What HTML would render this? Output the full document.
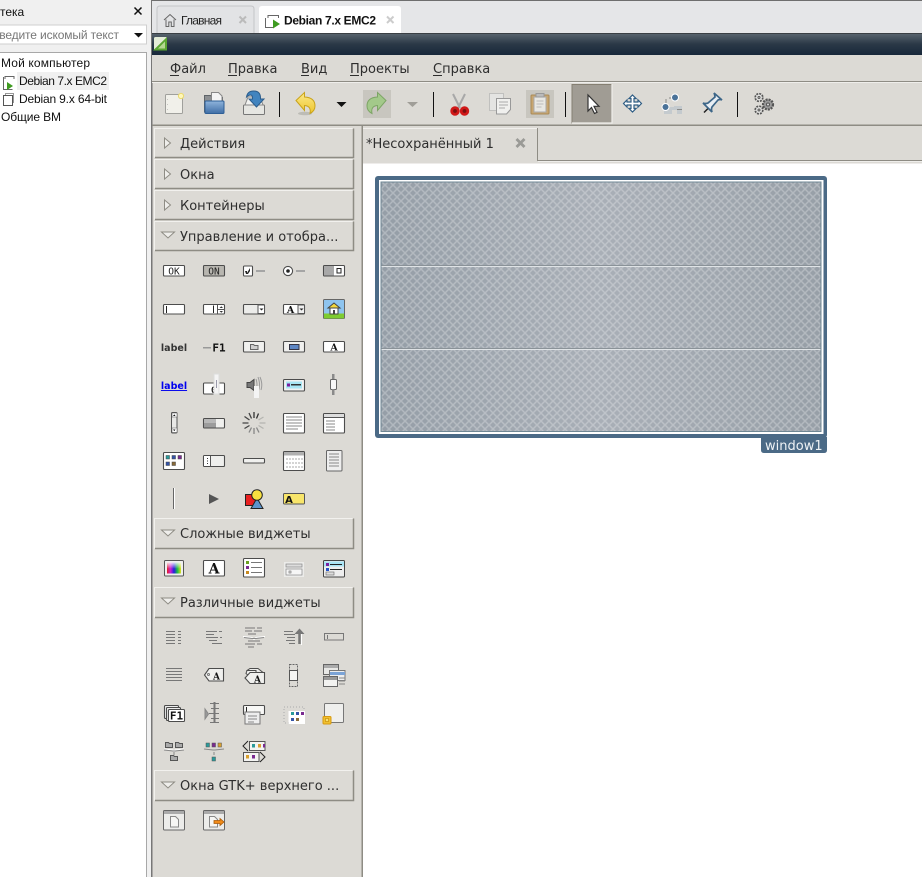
<!DOCTYPE html>
<html><head><meta charset="utf-8">
<style>
html,body{margin:0;padding:0;width:922px;height:877px;overflow:hidden;background:#dcdad5}
svg{display:block;position:absolute;left:0;top:0}
.l{font-family:"Liberation Sans",sans-serif;font-size:12px;fill:#111}
.d{font-family:"DejaVu Sans",sans-serif;font-size:13px;fill:#2e2e2e}
.i{fill:#fff;stroke:#4c4c4c;stroke-width:1.100}
.n{fill:none;stroke:#777;stroke-width:1}
.a{font-family:"DejaVu Serif","Liberation Serif",serif;font-weight:bold;font-size:10px;fill:#111;text-anchor:middle}
</style></head>
<body>
<svg width="922" height="877" viewBox="0 0 922 877" xmlns="http://www.w3.org/2000/svg">
<defs>
<linearGradient id="bar" x1="0" y1="0" x2="0" y2="1"><stop offset="0" stop-color="#5b6670"/><stop offset=".5" stop-color="#2b3947"/><stop offset="1" stop-color="#17273a"/></linearGradient>
<linearGradient id="win" x1="0" y1="0" x2="1" y2="0"><stop offset="0" stop-color="#959ea7"/><stop offset=".5" stop-color="#a9afb7"/><stop offset="1" stop-color="#979fa7"/></linearGradient>
<linearGradient id="rb" x1="0" y1="0" x2="1" y2="0"><stop offset="0" stop-color="#e02020"/><stop offset=".25" stop-color="#d020d0"/><stop offset=".5" stop-color="#2020e0"/><stop offset=".75" stop-color="#20c040"/><stop offset="1" stop-color="#e0e020"/></linearGradient>
<linearGradient id="wt" x1="0" y1="0" x2="0" y2="1"><stop offset="0" stop-color="#fff" stop-opacity=".85"/><stop offset="1" stop-color="#fff" stop-opacity=".05"/></linearGradient>
<linearGradient id="fold" x1="0" y1="0" x2="0" y2="1"><stop offset="0" stop-color="#8fb4dc"/><stop offset="1" stop-color="#3f6ea6"/></linearGradient>
<linearGradient id="yel" x1="0" y1="0" x2="0" y2="1"><stop offset="0" stop-color="#fbe98a"/><stop offset="1" stop-color="#eec52c"/></linearGradient>
<pattern id="dia" width="8" height="8" patternUnits="userSpaceOnUse" patternTransform="translate(1 1)">
<path d="M0 0L8 8M8 0L0 8" stroke="#fff" stroke-opacity=".26" stroke-width="1.500" fill="none"/>
</pattern>
</defs>

<!-- left panel -->
<rect x="0" y="0" width="151" height="877" fill="#f0f0f0"/>
<text class="l" x="0" y="16">тека</text>
<path d="M134.500 7.500l7 7m0-7l-7 7" stroke="#111" stroke-width="1.500"/>
<rect x="-2" y="25" width="148.500" height="19" fill="#fff" stroke="#cfcfcf"/>
<text class="l" x="-7" y="39" textLength="126" style="fill:#777">введите искомый текст</text>
<path d="M134 33h9l-4.500 4.500z" fill="#111"/>
<rect x="-2" y="52.500" width="148.500" height="830" fill="#fff" stroke="#a8a8a8"/>
<text class="l" x="1" y="67" textLength="89">Мой компьютер</text>
<rect x="17" y="72" width="92" height="18" fill="#f0f0f0"/>
<text class="l" x="19" y="85" textLength="88">Debian 7.x EMC2</text>
<path d="M5 79v-2.500h9v2.500M3.500 77v12.500h9" fill="none" stroke="#666"/><path d="M7 82v8l6-4z" fill="#3e9b20"/>
<text class="l" x="19" y="103" textLength="88">Debian 9.x 64-bit</text>
<rect x="5.500" y="93.500" width="8" height="9" fill="none" stroke="#999"/><rect x="3.500" y="95.500" width="9" height="10" fill="#fff" stroke="#555"/>
<text class="l" x="1" y="121" textLength="60">Общие ВМ</text>
<rect x="151" y="0" width="1.500" height="877" fill="#777"/>
<rect x="147" y="0" width="4" height="877" fill="#f0f0f0"/>

<!-- top tabs -->
<rect x="152" y="0" width="770" height="33" fill="#e5e6e8"/>
<rect x="152" y="0" width="770" height="1" fill="#6e6e6e"/>
<path d="M157 33V9q0-3 3-3h91q3 0 3 3v24" fill="#e2e3e5" stroke="#c4c5c8"/>
<path d="M164 20l6-5.500 6 5.500M166 19.500v7h2.800v-4.500h2.500v4.500h2.700v-7" fill="none" stroke="#666"/>
<text class="l" x="181" y="24.500" textLength="41" style="fill:#222">Главная</text>
<path d="M239.500 16.500l6.500 6.500m0-6.500l-6.500 6.500" stroke="#bbb" stroke-width="2"/>
<path d="M259 33V9q0-3 3-3h136q3 0 3 3v24z" fill="#fff"/>
<path d="M268 18v-2.500h10.500v2.500M265.500 18v9.500h8" fill="none" stroke="#666"/><path d="M273 19.500v9l7-4.500z" fill="#3e9b20"/>
<text x="284" y="24.500" textLength="92" style="font-family:'Liberation Sans',sans-serif;font-size:12px;font-weight:bold;fill:#111">Debian 7.x EMC2</text>
<path d="M387 16.500l6.500 6.500m0-6.500l-6.500 6.500" stroke="#ccc" stroke-width="2"/>

<!-- title bar -->
<rect x="152" y="33" width="770" height="22" fill="url(#bar)"/>
<rect x="152" y="33" width="770" height="1" fill="#3a3f44"/>
<rect x="154" y="37" width="13" height="13" rx="1.500" fill="#e4edd8"/>
<path d="M153 50.500L167 37v13.500z" fill="#5aa632"/><path d="M158 48.500l7-7v7z" fill="#b5d892"/>

<!-- menu -->
<rect x="152" y="55" width="770" height="26" fill="#dcdad5"/>
<rect x="152" y="81" width="770" height="1" fill="#8e8c84"/>
<rect x="152" y="82" width="770" height="1" fill="#efeeeb"/>
<text class="d" x="170" y="73">Файл</text><rect x="170" y="75" width="9" height="1" fill="#2e2e2e"/>
<text class="d" x="228" y="73">Правка</text><rect x="228" y="75" width="9" height="1" fill="#2e2e2e"/>
<text class="d" x="301" y="73">Вид</text><rect x="301" y="75" width="8" height="1" fill="#2e2e2e"/>
<text class="d" x="350" y="73">Проекты</text><rect x="350" y="75" width="9" height="1" fill="#2e2e2e"/>
<text class="d" x="433" y="73">Справка</text><rect x="433" y="75" width="9" height="1" fill="#2e2e2e"/>

<!-- toolbar -->
<rect x="152" y="124.500" width="770" height="1.500" fill="#8e8c84"/>
<rect x="165.500" y="94.500" width="17" height="19" rx="1" fill="#f1f0ea" stroke="#a0a09c"/>
<circle cx="181" cy="96" r="2.600" fill="#fff7b8" stroke="#ead96e"/>
<path d="M167.500 99v.5M167.500 104v.5M167.500 109v.5" stroke="#999"/>
<path d="M204.500 112V95.500h6l2 2h10v14.500z" fill="#8c8f92" stroke="#5f6468"/>
<path d="M211.500 92.500h7l3.500 3.500v6h-10.500z" fill="#f4f4f4" stroke="#888"/>
<rect x="205" y="101" width="19" height="12.500" rx="1" fill="url(#fold)" stroke="#2f5f96"/>
<rect x="243.500" y="105" width="21" height="9.500" rx="1" fill="#e6e6e2" stroke="#777"/>
<path d="M245 105l3-8h12l3 8z" fill="#f2f2f0" stroke="#888"/>
<path d="M246.500 97q1-6 7-6 7 0 7 7v1h3.500l-7.500 8-7.500-8h3.500v-1q0-3-2-3-2 0-4 2z" fill="#4184bf" stroke="#2c5d8c"/>
<rect x="279" y="92" width="1" height="25" fill="#111"/>
<ellipse cx="305" cy="113.500" rx="7" ry="1.800" fill="#bdbcb6"/>
<path d="M296 100.500L304.500 92.500v4.500q10.500 .5 10.500 9 0 5-5 7.500 1.500-7.500-5.500-8v5z" fill="url(#yel)" stroke="#c9a31c"/>
<path d="M336.500 102h10l-5 5z" fill="#111"/>
<rect x="363" y="90" width="28" height="28" fill="#c8c6bf"/>
<path d="M386 100.500L377.500 92.500v4.500q-10.500 .5-10.500 9 0 5 5 7.500-1.500-7.500 5.500-8v5z" fill="#a3c98a" stroke="#7da565"/>
<path d="M407 102h11l-5.500 5z" fill="#a09e98"/>
<rect x="433" y="92" width="1" height="25" fill="#111"/>
<path d="M453 94l7 14m5-14l-7 14" stroke="#a8a8a8" stroke-width="2"/>
<circle cx="455" cy="111" r="3.300" fill="#7a1010" stroke="#d01818" stroke-width="2.800"/>
<circle cx="464.500" cy="111" r="3.300" fill="#7a1010" stroke="#d01818" stroke-width="2.800"/>
<rect x="489.500" y="93.500" width="14" height="17" fill="#e4e4e2" stroke="#c0c0be"/>
<path d="M496.500 98.500h14v11l-4 4.500h-10z" fill="#f0f0ee" stroke="#999"/>
<path d="M499 102h9M499 105h9M499 108h6" stroke="#aaa"/>
<rect x="526" y="90" width="28" height="28" fill="#c8c6bf"/>
<rect x="531" y="95" width="18" height="19" rx="1" fill="#c8a670" stroke="#a88a58"/>
<rect x="534" y="97" width="12" height="15" fill="#e8e7e2" stroke="#aaa"/>
<rect x="536" y="93.500" width="8" height="3.500" fill="#bbb" stroke="#999"/>
<path d="M536.500 101h7M536.500 104h7M536.500 107h5" stroke="#bbb"/>
<rect x="565" y="92" width="1" height="25" fill="#111"/>
<rect x="572" y="84" width="40" height="39" fill="#a09c94"/>
<path d="M572 123.500V84.500h39.500" fill="none" stroke="#857f72"/><path d="M572 123h40V84" fill="none" stroke="#efeeeb" stroke-width="1.200"/>
<path d="M588 95v16l3.500-3.500 3 6 2.500-1.200-3-6h5z" fill="#fff" stroke="#333" stroke-width="1.200"/>
<path d="M632.500 95l3.500 3.500h-2v3.500h4v-2l3.500 3.500-3.500 3.500v-2h-4v3.500h2l-3.500 3.500-3.500-3.500h2v-3.500h-4v2l-3.500-3.500 3.500-3.500v2h4v-3.500h-2z" fill="#fff" stroke="#2f5d84" stroke-width="1.200"/>
<path d="M666 99v8M669 98h6" stroke="#8a8a88"/><rect x="664" y="107" width="18" height="7" fill="#c4cace"/><rect x="674" y="106" width="8" height="2" fill="#c4cace"/>
<path d="M677 109.500h5" stroke="#8a8a88"/><rect x="672" y="110" width="5" height="4" fill="#dcdad5"/>
<circle cx="675" cy="97.500" r="3.500" fill="#4a7298" stroke="#fff"/>
<circle cx="665.500" cy="107" r="3.500" fill="#4a7298" stroke="#fff"/>
<path d="M704 112.500l5-5" stroke="#222" stroke-width="1.500"/>
<path d="M703 103q3 1 5 0l7-6q0-2-1-4l8 7q-2-1-4 0l-6 7q-1 2 0 5z" fill="#e8eef4" stroke="#3d6688" stroke-width="1.700"/>
<rect x="737" y="92" width="1" height="25" fill="#111"/>
<g fill="#e2e2e0" stroke="#555">
<circle cx="759" cy="97.500" r="3.800" stroke-dasharray="2 1" stroke-width="1.700"/><circle cx="759" cy="97.500" r="1"/>
<circle cx="759" cy="110" r="3.800" stroke-dasharray="2 1" stroke-width="1.700"/><circle cx="759" cy="110" r="1"/>
<circle cx="768" cy="104.500" r="5" fill="#999" stroke-dasharray="2 1" stroke-width="2.200"/><circle cx="768" cy="104.500" r="1.500" fill="#ddd"/>
</g>

<!-- left palette -->
<rect x="152.500" y="126" width="209" height="751" fill="#dcdad5"/>
<rect x="361.500" y="126" width="1.500" height="751" fill="#8e8c84"/>

<!-- section headers -->
<path d="M154.500 157.500V128.500H353" fill="#dcdad5" stroke="#f2f1ee"/><path d="M155 157.500h198.500V128.500" fill="none" stroke="#8e8c84" stroke-width="1.500"/>
<path d="M154.500 188.500V159.500H353" fill="#dcdad5" stroke="#f2f1ee"/><path d="M155 188.500h198.500V159.500" fill="none" stroke="#8e8c84" stroke-width="1.500"/>
<path d="M154.500 219.500V190.500H353" fill="#dcdad5" stroke="#f2f1ee"/><path d="M155 219.500h198.500V190.500" fill="none" stroke="#8e8c84" stroke-width="1.500"/>
<path d="M154.500 250.500V221.500H353" fill="#dcdad5" stroke="#f2f1ee"/><path d="M155 250.500h198.500V221.500" fill="none" stroke="#8e8c84" stroke-width="1.500"/>
<path d="M154.500 548.500V518.500H353" fill="#dcdad5" stroke="#f2f1ee"/><path d="M155 548.500h198.500V518.500" fill="none" stroke="#8e8c84" stroke-width="1.500"/>
<path d="M154.500 617.500V587.500H353" fill="#dcdad5" stroke="#f2f1ee"/><path d="M155 617.500h198.500V587.500" fill="none" stroke="#8e8c84" stroke-width="1.500"/>
<path d="M154.500 800.500V770.500H353" fill="#dcdad5" stroke="#f2f1ee"/><path d="M155 800.500h198.500V770.500" fill="none" stroke="#8e8c84" stroke-width="1.500"/>
<g fill="#efeeeb" stroke="#8e8c84">
<path d="M164.500 138l6 5-6 5z"/><path d="M164.500 169l6 5-6 5z"/><path d="M164.500 200l6 5-6 5z"/>
<path d="M161.500 232h13l-6.500 6z"/><path d="M161.500 530h13l-6.500 6z"/><path d="M161.500 598h13l-6.500 6z"/><path d="M161.500 782h13l-6.500 6z"/>
</g>
<text class="d" x="180" y="148">Действия</text>
<text class="d" x="180" y="179">Окна</text>
<text class="d" x="180" y="210">Контейнеры</text>
<text class="d" x="180" y="241">Управление и отобра...</text>
<text class="d" x="180" y="538">Сложные виджеты</text>
<text class="d" x="180" y="607">Различные виджеты</text>
<text class="d" x="180" y="790">Окна GTK+ верхнего ...</text>

<!-- row 1 -->
<rect class="i" x="163.500" y="265.500" width="21" height="10.500" rx="1"/>
<text x="174" y="274.500" text-anchor="middle" style="font-family:'DejaVu Sans Mono',monospace;font-size:9.500px;fill:#222">OK</text>
<rect x="203.500" y="265.500" width="21" height="10.500" rx="1" fill="#b8b6b0" stroke="#4c4c4c" stroke-width="1.100"/>
<text x="214" y="274.500" text-anchor="middle" style="font-family:'DejaVu Sans Mono',monospace;font-size:9.500px;fill:#222">ON</text>
<rect class="i" x="243.500" y="266" width="9" height="10" rx="1"/><path d="M245 271h2v2l3-5v3l-2 3h-2z" fill="#222"/><rect x="256" y="270" width="9" height="2" fill="#a5a5a5"/>
<circle class="i" cx="288" cy="271" r="4.600"/><circle cx="288" cy="271" r="1.800" fill="#222"/><rect x="296" y="270" width="9" height="2" fill="#a5a5a5"/>
<rect class="i" x="323.500" y="265.500" width="21" height="10.500" rx="1"/><rect x="324" y="266" width="10" height="9.500" fill="#a8a8a8"/><rect x="337" y="268.500" width="4" height="4.500" fill="none" stroke="#222"/>
<!-- row 2 -->
<rect class="i" x="163.500" y="304.500" width="21" height="9.500" rx="1"/><rect x="166" y="306" width="1" height="7" fill="#222"/>
<rect class="i" x="203.500" y="304.500" width="21" height="9.500" rx="1"/><rect x="213" y="305.500" width="1" height="7.500" fill="#222"/><path d="M217.500 305v9M218 309.500h7" stroke="#555"/><path d="M219.500 308h3.500l-1.700-1.800zM219.500 311h3.500l-1.700 1.800z" fill="#333"/>
<rect x="243.500" y="304.500" width="21" height="9.500" rx="1" fill="#ececea" stroke="#4c4c4c" stroke-width="1.100"/><rect x="258" y="305" width="6.500" height="8.500" fill="#fff" stroke="#555"/><path d="M259.500 308.500h4l-2 2z" fill="#222"/>
<rect class="i" x="283.500" y="304.500" width="21" height="9.500" rx="1"/><text class="a" x="290.500" y="313" style="font-size:9.500px">A</text><rect x="298" y="305" width="6.500" height="8.500" fill="#eee" stroke="#555"/><path d="M299.500 308.500h4l-2 2z" fill="#222"/>
<rect x="323.500" y="299.500" width="21" height="19" rx="1" fill="#8ec4ef" stroke="#666"/><rect x="324" y="313.500" width="20" height="5" fill="#7ecc30"/><path d="M328 308l6-5 6 5z" fill="#f5d83c" stroke="#444"/><rect x="330" y="308" width="8" height="6" fill="#fff" stroke="#444"/><rect x="333" y="310" width="2" height="4" fill="#444"/>
<!-- row 3 -->
<text x="174" y="351" text-anchor="middle" style="font-family:'DejaVu Sans',sans-serif;font-size:9.500px;font-weight:bold;fill:#333">label</text>
<rect x="203" y="347" width="8" height="1.500" fill="#999"/><text x="219" y="351.500" text-anchor="middle" style="font-family:'DejaVu Sans Mono',monospace;font-size:11px;font-weight:bold;fill:#111">F1</text>
<rect x="243.500" y="341.500" width="21" height="10.500" rx="1" fill="#f0f0ee" stroke="#4c4c4c" stroke-width="1.100"/><path d="M250.500 344.500h3l1 1h3.500v4h-7.500z" fill="#cfcfcf" stroke="#666"/>
<rect x="283.500" y="341.500" width="21" height="10.500" rx="1" fill="#f0f0ee" stroke="#4c4c4c" stroke-width="1.100"/><rect x="289.500" y="344.500" width="9.500" height="5" fill="#5d86c4" stroke="#334"/>
<rect class="i" x="323.500" y="341.500" width="21" height="10.500" rx="1"/><text class="a" x="334" y="350.500" style="font-size:9.500px">A</text>
<!-- row 4 -->
<text x="174" y="389" text-anchor="middle" style="font-family:'DejaVu Sans',sans-serif;font-size:9.500px;font-weight:bold;fill:#0000ee;text-decoration:underline">label</text>
<rect class="i" x="203.500" y="383" width="21" height="11" rx="1"/><text x="211" y="393" style="font-family:'DejaVu Sans Mono',monospace;font-size:9px;font-weight:bold;fill:#222">0</text>
<rect x="214" y="374" width="5" height="20" fill="#f4f4f4" stroke="#ddd"/><rect x="216" y="380" width="1" height="8" fill="#99a"/>
<path d="M247 382.500h3l4-3v11l-4-3h-3z" fill="#777" stroke="#444"/><path d="M256 379q2 6 0 11M258 377q3 8 0 15M260 377q3 7 1 13" fill="none" stroke="#9a9a9a"/>
<rect x="254" y="386" width="5" height="12" fill="#f4f4f4"/>
<rect x="283.500" y="379.500" width="21" height="11.500" rx="1" fill="#f2f2f2" stroke="#4c4c4c" stroke-width="1.100"/><rect x="286" y="381.500" width="16" height="7" fill="#a8e6f4"/><rect x="287" y="383.500" width="3" height="3" fill="#7a1fa0"/><rect x="291" y="384" width="10" height="1.500" fill="#333"/>
<rect x="332" y="374" width="2.500" height="6" fill="#8a8a8a"/><rect x="330.500" y="379.500" width="6" height="10" rx="1" fill="#f8f8f8" stroke="#666"/><rect x="332" y="389" width="2.500" height="6" fill="#8a8a8a"/>
<!-- row 5 -->
<rect x="171.500" y="412.500" width="5.500" height="20.500" rx="1" fill="#e8e8e6" stroke="#555"/><rect x="172" y="413" width="5" height="4" fill="#fff" stroke="#555" stroke-width=".5"/><rect x="172" y="428" width="5" height="4.500" fill="#fff" stroke="#555" stroke-width=".5"/>
<path d="M173 416h2.500l-1.200-1.600zM173 429.500h2.500l-1.200 1.600z" fill="#111"/>
<rect x="203.500" y="418.500" width="21" height="9.500" rx="1" fill="#f0f0ee" stroke="#4c4c4c" stroke-width="1.100"/><rect x="204" y="419" width="12" height="8.500" fill="#9c9c9c"/><rect x="204" y="419" width="12" height="4" fill="#b8b8b8"/>
<g stroke-width="1.300">
<path d="M254 418V412M256.500 418.500l2-5" stroke="#333"/><path d="M251.500 418.500l-2.500-5.500M249.500 420l-5-3.500M248.500 423h-6M249.500 425.500l-5 3" stroke="#444"/>
<path d="M251.500 427.500l-2.500 5M254 428v6M256.500 427.500l2.500 5" stroke="#888"/><path d="M258.500 425.500l5 3M259.500 423h6M258.500 420l5-3" stroke="#b4b4b0"/>
</g>
<rect class="i" x="283.500" y="413.500" width="21" height="19.500" rx="1"/><path d="M286 417h16M286 420h16M286 423h16M286 426h16M286 429h12" stroke="#888"/>
<rect class="i" x="323.500" y="413.500" width="21" height="19.500" rx="1"/><rect x="324" y="414" width="20" height="3.500" fill="#ddd"/><path d="M324 417.500h20" stroke="#555"/><path d="M326 421h9M326 424h9M326 427h9M326 430h9" stroke="#888"/>
<!-- row 6 -->
<rect class="i" x="163.500" y="452.500" width="21" height="17" rx="1"/>
<rect x="166" y="455.500" width="3.500" height="3.500" fill="#2a9a9a" stroke="#444" stroke-width=".5"/><rect x="172" y="455.500" width="3.500" height="3.500" fill="#3454a8" stroke="#444" stroke-width=".5"/><rect x="178" y="455.500" width="3.500" height="3.500" fill="#7a2a90" stroke="#444" stroke-width=".5"/>
<rect x="166" y="462" width="3.500" height="3.500" fill="#3454a8" stroke="#444" stroke-width=".5"/><rect x="172" y="462" width="3.500" height="3.500" fill="#886a38" stroke="#444" stroke-width=".5"/>
<rect x="203.500" y="455.500" width="21" height="11" rx="1" fill="#efefed" stroke="#4c4c4c" stroke-width="1.100"/><rect x="204" y="456" width="6.500" height="10" fill="#fff"/><path d="M210.500 456v10" stroke="#555"/><path d="M207.500 458v1M207.500 460.500v1M207.500 463v1" stroke="#333"/>
<rect x="243.500" y="458.500" width="21" height="4.500" rx="1" fill="#f0f0ee" stroke="#4c4c4c" stroke-width="1.100"/>
<rect class="i" x="283.500" y="451.500" width="21" height="19" rx="1"/><rect x="284" y="452" width="20" height="3.500" fill="#b0b0b0"/><path d="M286.500 459h16M286.500 463h16M286.500 467h16" stroke="#555" stroke-dasharray="1 2"/>
<rect x="326.500" y="450.500" width="15.500" height="20.500" rx="1" fill="#eee" stroke="#666"/><path d="M329 454h10M329 457h10M329 460h10M329 463h10M329 466h10" stroke="#888"/>
<!-- row 7 -->
<rect x="173" y="488" width="1" height="21" fill="#666"/><rect x="174" y="488" width="1" height="21" fill="#fff"/>
<path d="M209 494l10 5-10 5z" fill="#555"/>
<rect x="245.500" y="494.500" width="10" height="11" fill="#e82020" stroke="#222"/><path d="M257 498l6 10.500h-12z" fill="#5c94cc" stroke="#222"/><circle cx="257" cy="495" r="5.300" fill="#f8e040" stroke="#222"/>
<rect x="283.500" y="493.500" width="21" height="10.500" rx="1" fill="#f8e56a" stroke="#555"/><text x="289" y="503" text-anchor="middle" style="font-family:'DejaVu Sans',sans-serif;font-size:10px;font-weight:bold;fill:#111">A</text>

<!-- complex -->
<rect x="164.500" y="560.500" width="19" height="15.500" rx="1" fill="#f0f0f0" stroke="#555"/><rect x="167" y="562.500" width="14" height="11" fill="url(#rb)"/><rect x="167" y="562.500" width="14" height="6" fill="url(#wt)"/>
<rect class="i" x="203.500" y="560.500" width="21" height="15.500" rx="1"/><text class="a" x="214" y="573.500" style="font-size:14px">A</text>
<rect class="i" x="243.500" y="558.500" width="21" height="18.500" rx="1"/><rect x="246" y="561" width="3" height="3" fill="#6aa020"/><rect x="246" y="566" width="3" height="3" fill="#7a2a90"/><rect x="246" y="571" width="3" height="3" fill="#c88a20"/><path d="M251 562.500h11M251 567.500h11M251 572.500h11" stroke="#777"/>
<rect x="284" y="562" width="20" height="15" fill="#ececea"/><rect x="286" y="564" width="16" height="3" fill="#ddd" stroke="#888" stroke-width=".7"/><rect x="286" y="569" width="16" height="6" fill="#f6f6f6" stroke="#888" stroke-width=".7"/><rect x="289" y="571" width="2" height="2" fill="none" stroke="#666" stroke-width=".6"/>
<rect x="323.500" y="560.500" width="21" height="16.500" rx="1" fill="#eee" stroke="#444"/><rect x="324" y="561.500" width="20" height="5" fill="#a8e4f4"/><rect x="326" y="563" width="3" height="3" fill="#7a1fa0"/><rect x="330" y="564" width="12" height="1" fill="#222"/><rect x="326" y="568" width="3" height="3" fill="#2454c8"/><rect x="330" y="569" width="12" height="1" fill="#222"/><rect x="326" y="572" width="8" height="3" fill="#ddd" stroke="#666" stroke-width=".6"/>

<!-- misc row 1 -->
<g stroke="#777" fill="none">
<path d="M166 631.500h9M166 634.500h9M166 637.500h9M166 640.500h9M166 643.500h9M178 631.500h3M178 634.500h3M178 637.500h3M178 640.500h3M178 643.500h3"/>
<path d="M206 631.500h11M219 631.500h3M206 634.500h8M206 637.500h12M220 637.500h2M209 640.500h8M212 643.500h10"/>
<path d="M245 628h10M257 628h5M245 631h7M254 631h8M248 634h8M248 641h12M245 644h10M257 644h5M248 647h6"/>
<path d="M284 631.500h9M284 634.500h11M287 637.500h8M286 640.500h9M289 643.500h6"/>
<rect x="324.500" y="633.500" width="19" height="6.500"/>
<path d="M327.500 635v4"/>
<path d="M166 668.500h16M166 671.500h16M166 674.500h16M166 677.500h16M166 680.500h16"/>
</g>
<path d="M243 636.500l9 1 2 2 2-2 9-1" fill="none" stroke="#fff"/><path d="M244 637.500l8 1h4l8-1" fill="none" stroke="#888"/>
<path d="M299.500 631v13" stroke="#777" stroke-width="2.500"/><path d="M294.500 634l5-5.500 5 5.500z" fill="#777"/><path d="M301.500 634v11" stroke="#fff"/>

<!-- misc row 2 -->
<path d="M209 668.500h14.500v12.500H209l-4.500-6z" fill="#f0f0ee" stroke="#4c4c4c" stroke-width="1.100"/><circle cx="208.500" cy="674.500" r="1" fill="none" stroke="#777"/><text class="a" x="216.500" y="679.500" style="font-size:9px">A</text>
<path d="M250 668.500h8l5 4h-13l-3-2z" fill="#ececea" stroke="#4c4c4c"/><path d="M247 670.500h9v8h-4l-6-5z" fill="#f0f0ee" stroke="#4c4c4c"/>
<path d="M250 672.500h14.500v11H250l-5-5.500z" fill="#f0f0ee" stroke="#4c4c4c" stroke-width="1.100"/><text class="a" x="257.500" y="682.500" style="font-size:9px">A</text>
<g fill="none" stroke="#666" stroke-dasharray="2 1"><rect x="289.500" y="664.500" width="8" height="6"/><rect x="289.500" y="680.500" width="8" height="6"/></g><rect x="289.500" y="670.500" width="8" height="10" fill="#f6f6f4" stroke="#555"/>
<rect x="323.500" y="664.500" width="15" height="10" fill="#e8e8e6" stroke="#666"/><rect x="324" y="665" width="14" height="3" fill="#aaa"/>
<rect x="329.500" y="670.500" width="15.500" height="10" fill="#eee" stroke="#777"/><rect x="330" y="672" width="15" height="3" fill="#7ba3d6"/>
<rect x="323.500" y="676.500" width="14" height="10" fill="#f2f2f0" stroke="#666"/><rect x="324" y="677" width="13" height="3" fill="#999"/>
<path d="M339 678h6M339 681h6M339 684h6" stroke="#888"/>

<!-- misc row 3 -->
<rect class="i" x="164.500" y="705.500" width="14" height="13" rx="1" style="fill:#eee"/><rect class="i" x="166.500" y="707.500" width="14" height="13" rx="1" style="fill:#eee"/>
<rect class="i" x="168.500" y="709.500" width="16" height="12" rx="1"/><text x="176.500" y="719.500" text-anchor="middle" style="font-family:'DejaVu Sans Mono',monospace;font-size:11px;font-weight:bold;fill:#111">F1</text>
<path d="M205 709v10l3.500-5z" fill="#999" stroke="#888"/>
<path d="M214.500 702v20" stroke="#777" stroke-width="2"/><path d="M210 703.500h9M211 708.500h8M209 713.500h10M211 718.500h8M210 722.500h9" stroke="#777"/>
<rect class="i" x="243.500" y="705.500" width="21" height="9" rx="1" style="fill:#f8f8f6"/><rect x="246" y="707" width="1" height="7" fill="#222"/>
<rect x="245" y="712" width="15" height="12" fill="#eee" stroke="#777"/><path d="M248 716h9M248 719h9M248 722h6" stroke="#888"/>
<rect x="284" y="707" width="20" height="16" fill="none" stroke="#aaa" stroke-dasharray="1 2"/>
<rect x="288.500" y="711" width="16.500" height="13" fill="#fff"/>
<rect x="291" y="712" width="3" height="3" fill="#2a9a9a"/><rect x="296" y="712" width="3" height="3" fill="#3454a8"/><rect x="301" y="712" width="3" height="3" fill="#7a2a90"/><rect x="291" y="718" width="3" height="3" fill="#3454a8"/><rect x="296" y="718" width="3" height="3" fill="#886a38"/>
<rect x="324.500" y="703.500" width="19" height="19" rx="1" fill="#efefed" stroke="#777"/>
<rect x="323" y="716.500" width="8" height="7.500" rx="1" fill="#f0c030" stroke="#d89a10"/><rect x="325.500" y="718.500" width="3" height="3" fill="#f8e070" stroke="#c89010" stroke-width=".7"/>

<!-- misc row 4 -->
<path d="M165.500 742.500h3l1 1h3v4h-7zM175.500 742.500h3l1 1h3v4h-7zM170.500 755.500h3l1 1h3v4h-7z" fill="#aaa" stroke="#555"/>
<path d="M164 749l9 1 1 1.500 1-1.500 9-1" fill="none" stroke="#fff"/>
<path d="M164 750l9 1h2l9-1M174 752v3" fill="none" stroke="#888"/>
<rect x="206" y="743" width="3.500" height="4" fill="#2a9a9a" stroke="#555" stroke-width=".5"/><rect x="212" y="743" width="3.500" height="4" fill="#7a2a90" stroke="#555" stroke-width=".5"/><rect x="218" y="743" width="3.500" height="4" fill="#d8a030" stroke="#555" stroke-width=".5"/>
<path d="M204 749l9 1h2l9-1M214 752v3" fill="none" stroke="#888"/><rect x="212" y="757" width="3.500" height="4" fill="#2a9a9a" stroke="#555" stroke-width=".5"/>
<path d="M248 741l-5 5 5 5" fill="none" stroke="#222"/>
<rect x="249.500" y="741.500" width="15.500" height="9" fill="#f4f4f2" stroke="#555"/><rect x="252" y="744" width="3" height="3.500" fill="#2a9a9a"/><rect x="258" y="744" width="3" height="3.500" fill="#d8a030"/><rect x="263" y="744" width="2" height="3.500" fill="#7a2a90"/>
<rect x="243.500" y="752.500" width="15.500" height="9" fill="#f4f4f2" stroke="#555"/><rect x="246" y="755" width="3" height="3.500" fill="#d8a030"/><rect x="252" y="755" width="3" height="3.500" fill="#7a2a90"/>
<path d="M260 752l5 5-5 5" fill="none" stroke="#222"/>

<!-- windows -->
<rect x="163.500" y="810.500" width="21" height="19.500" rx="1" fill="#ececea" stroke="#666"/><rect x="164" y="811" width="20" height="3" fill="#aaa"/>
<path d="M170.500 816.500h5l3 3v7.500h-8z" fill="#f6f6f4" stroke="#888"/>
<rect x="203.500" y="810.500" width="21" height="19.500" rx="1" fill="#ececea" stroke="#666"/><rect x="204" y="811" width="20" height="3" fill="#aaa"/>
<path d="M209.500 816.500h5l3 3v7.500h-8z" fill="#f6f6f4" stroke="#888"/>
<path d="M214 820.500h6v-2l4 3.500-4 3.500v-2h-6z" fill="#f08a18" stroke="#a85a08" stroke-width=".8"/>

<!-- notebook -->
<rect x="363" y="126" width="559" height="38" fill="#dcdad5"/>
<rect x="363" y="163.500" width="559" height="714" fill="#fff"/>
<rect x="538" y="160" width="384" height="1" fill="#8e8c84"/><rect x="538" y="161" width="384" height="1" fill="#efeeeb"/>
<rect x="363" y="128" width="174" height="1" fill="#f0efec"/>
<rect x="537" y="128" width="1" height="33" fill="#8e8c84"/>
<text class="d" x="366" y="148">*Несохранённый 1</text>
<path d="M516.500 139l8 8m0-8l-8 8" stroke="#9a9a96" stroke-width="2.800"/>

<!-- window preview -->
<rect x="375" y="176" width="452" height="262" rx="3" fill="#4b6a86"/>
<path d="M761 437h66v13q0 3-3 3h-60q-3 0-3-3z" fill="#4b6a86"/>
<text x="765" y="450" style="font-family:'DejaVu Sans',sans-serif;font-size:13px;fill:#eef2f5">window1</text>
<rect x="379" y="180" width="444.500" height="254" fill="#fff"/>
<rect x="380.500" y="181.500" width="441" height="250.500" fill="#6f8794"/>
<rect x="381.500" y="182.500" width="439" height="248.500" fill="url(#win)"/>
<rect x="381.500" y="182.500" width="439" height="248.500" fill="url(#dia)"/>
<rect x="381.500" y="265" width="439" height="1" fill="#8a9298"/><rect x="381.500" y="266" width="439" height="1" fill="#dfe3e6"/>
<rect x="381.500" y="348" width="439" height="1" fill="#8a9298"/><rect x="381.500" y="349" width="439" height="1" fill="#dfe3e6"/>
</svg>
</body></html>
